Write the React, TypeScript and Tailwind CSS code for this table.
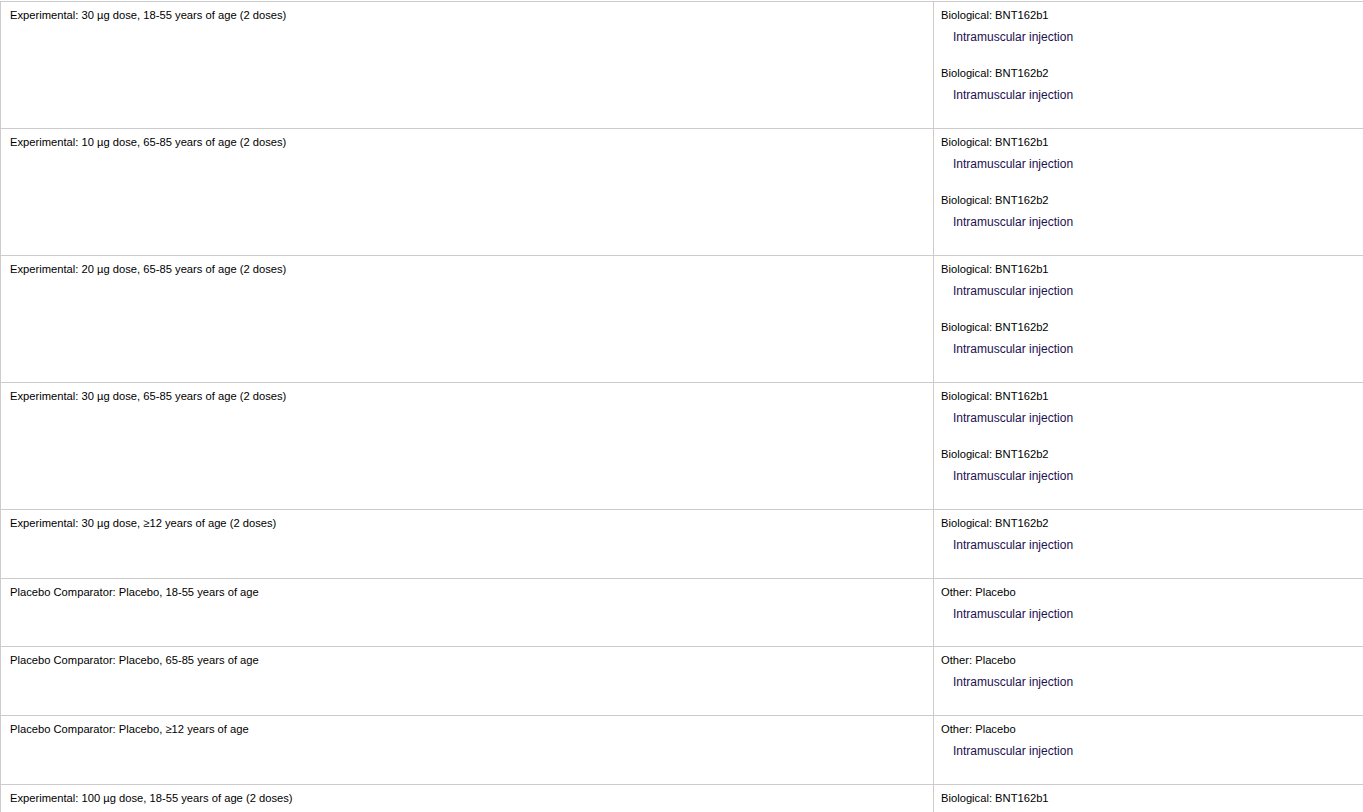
import React from "react";

type Item = { label: string; desc: string };
type Row = { arm: string; items: Item[]; tight?: boolean };

const b1: Item = { label: "Biological: BNT162b1", desc: "Intramuscular injection" };
const b2: Item = { label: "Biological: BNT162b2", desc: "Intramuscular injection" };
const pl: Item = { label: "Other: Placebo", desc: "Intramuscular injection" };

const rows: Row[] = [
  { arm: "Experimental: 30 µg dose, 18-55 years of age (2 doses)", items: [b1, b2] },
  { arm: "Experimental: 10 µg dose, 65-85 years of age (2 doses)", items: [b1, b2] },
  { arm: "Experimental: 20 µg dose, 65-85 years of age (2 doses)", items: [b1, b2] },
  { arm: "Experimental: 30 µg dose, 65-85 years of age (2 doses)", items: [b1, b2] },
  { arm: "Experimental: 30 µg dose, ≥12 years of age (2 doses)", items: [b2] },
  { arm: "Placebo Comparator: Placebo, 18-55 years of age", items: [pl], tight: true },
  { arm: "Placebo Comparator: Placebo, 65-85 years of age", items: [pl] },
  { arm: "Placebo Comparator: Placebo, ≥12 years of age", items: [pl] },
  { arm: "Experimental: 100 µg dose, 18-55 years of age (2 doses)", items: [b1] },
];

export default function App() {
  return (
    <div
      className="w-[1363px] h-[812px] overflow-hidden bg-white pt-[1px]"
      style={{ fontFamily: '"Liberation Sans", Arial, sans-serif' }}
    >
      <div className="w-[1380px] border-t border-l border-[#cccccc]">
        {rows.map((r, i) => (
          <div key={i} className="flex border-b border-[#cccccc]">
            <div className="w-[933px] shrink-0 border-r border-[#cccccc] pl-[9px] pt-[7px] text-[11.2px] leading-[13px] text-black">
              {r.arm}
            </div>
            <div
              className={
                "flex-1 pl-[7px] pt-[7px] flex flex-col gap-[23px] " +
                (r.tight ? "pb-[25px]" : "pb-[26px]")
              }
            >
              {r.items.map((it, j) => (
                <div key={j} className="flex flex-col">
                  <div className="text-[11.2px] leading-[13px] text-black">{it.label}</div>
                  <div className="mt-[8px] pl-[12px] text-[12px] leading-[14px] text-[#22104f]">
                    {it.desc}
                  </div>
                </div>
              ))}
            </div>
          </div>
        ))}
      </div>
    </div>
  );
}
